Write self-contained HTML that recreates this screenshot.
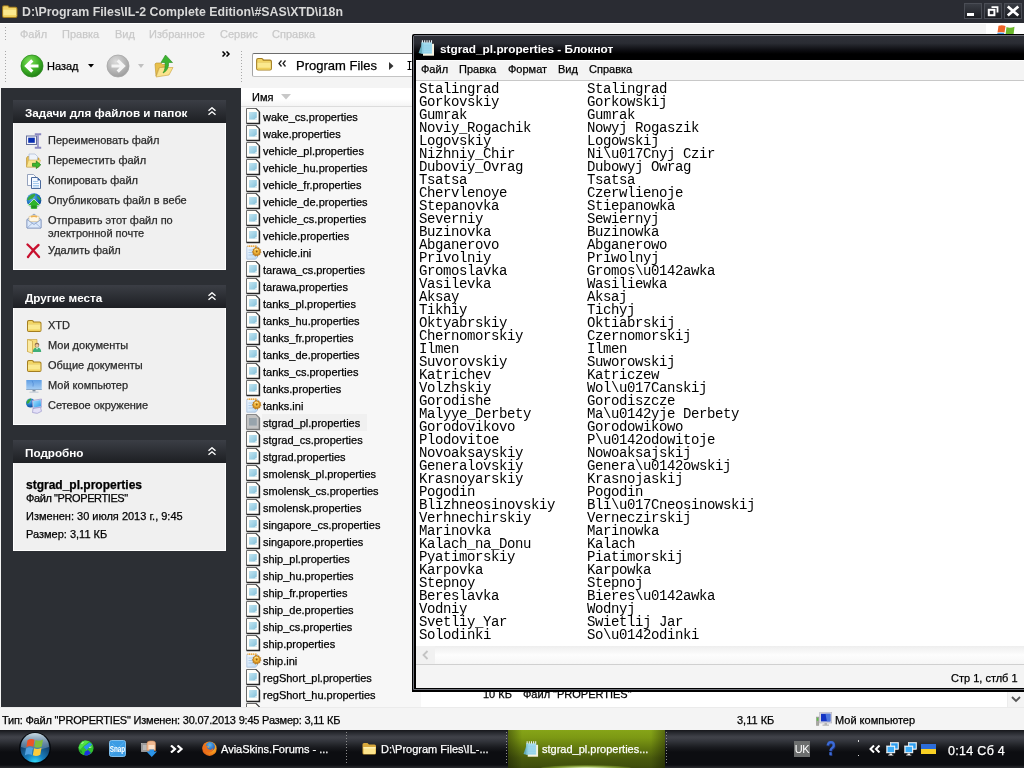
<!DOCTYPE html>
<html><head><meta charset="utf-8"><title>screen</title>
<style>
*{box-sizing:border-box;margin:0;padding:0}
html,body{width:1024px;height:768px;overflow:hidden;background:#f4f4f4}
#root{position:absolute;left:0;top:0;width:1024px;height:768px;overflow:hidden;will-change:transform}
body{font-family:"Liberation Sans",sans-serif;font-size:11px;color:#000;position:relative}
.abs{position:absolute}
.t{position:absolute;white-space:nowrap;line-height:14px;-webkit-text-stroke:0.250px currentColor}
/* explorer */
#etitle{position:absolute;left:0;top:0;width:1024px;height:23px;background:#2a2c33}
#etitle .cap{position:absolute;left:22px;top:4px;font-weight:bold;font-size:12.350px;line-height:16px;color:#d8d8d8;white-space:nowrap}
.tb{position:absolute;top:3px;width:18px;height:16px;border:1px solid #4a4d55;background:linear-gradient(#3a3d45,#1b1d22)}
#emenu{position:absolute;left:0;top:23px;width:1024px;height:22px;background:#f4f4f4;border-top:1px solid #fff}
#emenu .t{top:3px;color:#c9c9c9;font-size:11px}
#etool{position:absolute;left:0;top:45px;width:1024px;height:43px;background:#f4f4f4}
#side{position:absolute;left:1px;top:88px;width:240px;height:619px;background:#2c2f34}
.ph{position:absolute;left:12px;width:213px;height:23px;z-index:2;background:linear-gradient(#3b3e45,#1d1f23);color:#fff;font-weight:bold;font-size:11.700px;line-height:25px;overflow:hidden;padding-left:12px;white-space:nowrap}
.pb{position:absolute;left:12px;width:213px;background:#f0f0f0;box-shadow:inset 1px 0 0 #fff,inset -1px -1px 0 #fff}
.pb .t{left:35px;color:#2a2a2a;font-size:11px}
.pb .d{left:13px;color:#000}
#list{position:absolute;left:241px;top:88px;width:783px;height:619px;background:#fff;overflow:hidden}
#namecol{position:absolute;left:0;top:19px;width:180px;height:600px;background:#f7f7f7}
#lhead{position:absolute;left:0;top:0;width:783px;height:19px;background:linear-gradient(#fff,#fff 60%,#f4f4f4);border-bottom:1px solid #dcdcdc}
.row{position:absolute;left:5px;height:17px;white-space:nowrap;font-size:11px;line-height:18px}
.row span{-webkit-text-stroke:0.250px #000;position:absolute;left:16px;top:0;padding:0 1px;height:17px}
.row.sel span{background:#f0f0f0;padding-right:7px}
.ic{position:absolute;left:0;top:0;width:16px;height:17px}
#estat{position:absolute;left:0;top:707px;width:1024px;height:23px;background:#f4f4f4;border-top:1px solid #ebebeb}
#estat .t{top:5px;font-size:11px}
/* notepad */
#np{position:absolute;left:412px;top:34px;width:640px;height:658px;background:#000;border-top-left-radius:2px}
#npgl{position:absolute;left:1px;top:1px;width:640px;height:655px;border:1px solid #70727a;border-top-left-radius:2px}
#nptitle{position:absolute;left:2px;top:2px;width:640px;height:24px;background:linear-gradient(#2f3138 0,#2a2c33 30%,#0c0c10 60%,#000 75%,#000 100%)}
#nptitle .cap{position:absolute;left:26px;top:6px;color:#fff;font-weight:bold;font-size:11.800px;line-height:14px;white-space:nowrap}
#npmenu{position:absolute;left:4px;top:26px;width:640px;height:21px;background:#f4f4f4;border-bottom:1px solid #c8c8c8;border-top:1px solid #fdfdfd}
#npmenu .t{top:1px;font-size:11px}
#nptext{position:absolute;left:4px;top:47px;width:640px;height:565px;background:#fff;font-family:"Liberation Mono",monospace;font-size:14px;letter-spacing:-0.400px;line-height:13px;padding:2px 0 0 3px;overflow:hidden}
.ln{position:relative;height:13px;white-space:pre}
.c2{position:absolute;left:168px;top:0}
#nphs{position:absolute;left:4px;top:612px;width:640px;height:18px;background:linear-gradient(#eee,#fdfdfd 50%,#f6f6f6)}
#npstat{position:absolute;left:4px;top:630px;width:640px;height:24px;background:#f4f4f4;border-top:1px solid #d0d0d0}
/* taskbar */
#task{position:absolute;left:0;top:730px;width:1024px;height:38px;background:linear-gradient(#15161a 0,#23252a 2px,#35373e 5px,#404249 7px,#3e4047 8px,#33353c 11px,#27292e 14px,#1b1c21 17px,#121317 20px,#0c0d11 22px,#0c0d11 35px,#222327 37px,#28292d 38px)}
#task .t{color:#fff;font-size:11px;top:12px}
#tactive{position:absolute;left:508px;top:0;width:157px;height:38px;overflow:hidden;background:linear-gradient(to right,rgba(0,0,0,0.350),rgba(0,0,0,0) 9%,rgba(0,0,0,0) 91%,rgba(0,0,0,0.350)),linear-gradient(#86a418 0,#7c9814 8px,#62790f 18px,#4a5b0d 28px,#3e4c0c 38px)}
#tglow{position:absolute;left:33px;top:35px;width:90px;height:6px;border-radius:50%;background:radial-gradient(ellipse at center,rgba(235,255,190,0.950) 0,rgba(170,205,70,0.500) 50%,rgba(120,150,30,0) 80%)}
.tsep{position:absolute;top:2px;width:1px;height:33px;background:repeating-linear-gradient(#8c8c8c 0,#8c8c8c 1px,transparent 1px,transparent 3px)}

</style></head>
<body>
<svg width="0" height="0" style="position:absolute"><defs><linearGradient id="pg" x1="0" y1="0" x2="1" y2="1"><stop offset="0" stop-color="#c4e4f0"/><stop offset="0.600" stop-color="#9cd0e4"/><stop offset="1" stop-color="#84bcd4"/></linearGradient><linearGradient id="ig" x1="0" y1="0" x2="1" y2="1"><stop offset="0" stop-color="#f4f9ff"/><stop offset="1" stop-color="#b8d8f4"/></linearGradient></defs></svg>
<div id="root">
<!-- Explorer window -->
<div id="etitle">
  <svg class="abs" style="left:1px;top:3px" width="17" height="16" viewBox="0 0 16 15" preserveAspectRatio="none"><path d="M1 3.800q0-1.800 1.800-1.800h3.400q1.300 0 1.800 1.500h5.700q1.800 0 1.800 1.800v6.900q0 1.800-1.800 1.800h-10.900q-1.800 0-1.800-1.800z" fill="#a47e20"/><path d="M2 4q0-1 1-1h3q0.800 0 1.200 1.500h6.300q1 0 1 1v1h-12.500z" fill="#f2d566"/><path d="M2 6.300h12.500v5.700q0 1-1 1h-10.500q-1 0-1-1z" fill="#fbe98e"/><path d="M2 11.500h12.500v0.500q0 1-1 1h-10.500q-1 0-1-1z" fill="#f0cf5a"/></svg>
  <div class="cap">D:\Program Files\IL-2 Complete Edition\#SAS\XTD\i18n</div>
  <div class="tb" style="left:964px"><svg class="abs" style="left:-1px;top:-1px" width="18" height="16" viewBox="0 0 18 16"><rect x="3" y="10" width="7" height="3" fill="#fff"/></svg></div>
  <div class="tb" style="left:984px"><svg class="abs" style="left:-1px;top:-1px" width="18" height="16" viewBox="0 0 18 16"><path d="M7.500 4.200h6v5.300" fill="none" stroke="#fff" stroke-width="1.800"/><rect x="4.800" y="6.800" width="5.600" height="5.400" fill="none" stroke="#fff" stroke-width="2"/></svg></div>
  <div class="tb" style="left:1004px"><svg class="abs" style="left:-1px;top:-1px" width="18" height="16" viewBox="0 0 18 16"><path d="M3.800 3.500l10.500 9M14.300 3.500l-10.500 9" stroke="#fff" stroke-width="2.800"/></svg></div>
</div>
<div id="emenu">
  <div class="abs" style="left:5px;top:3px;width:1px;height:14px;background:repeating-linear-gradient(#a8a8a8 0,#a8a8a8 1px,transparent 1px,transparent 3px)"></div>
  <div class="t" style="left:20px">Файл</div>
  <div class="t" style="left:62px">Правка</div>
  <div class="t" style="left:115px">Вид</div>
  <div class="t" style="left:149px">Избранное</div>
  <div class="t" style="left:220px">Сервис</div>
  <div class="t" style="left:272px">Справка</div>
  <div class="abs" style="left:986px;top:0;width:38px;height:22px;background:#fff"></div><svg class="abs" style="left:996px;top:1px" width="20" height="12" viewBox="0 0 20 12"><path d="M2.500 0.800q3.500-1.200 7 0.200l-1 6.500q-3.500-1.200-7 0z" fill="#f06428"/><path d="M10.500 2q3.500 1.500 8-0.300l-1 8.300h-8z" fill="#6cb82c"/><path d="M1.400 8q3.500-1.200 6.800 0l-0.500 4h-6.800z" fill="#4c9ce0"/></svg>
</div>
<div id="etool">
  <div class="abs" style="left:5px;top:6px;width:1px;height:31px;background:repeating-linear-gradient(#a8a8a8 0,#a8a8a8 1px,transparent 1px,transparent 3px)"></div>
  <svg class="abs" style="left:20px;top:9px" width="24" height="24" viewBox="0 0 24 24">
    <defs><radialGradient id="gb" cx="0.4" cy="0.3" r="0.75"><stop offset="0" stop-color="#7fe05a"/><stop offset="0.55" stop-color="#3db026"/><stop offset="1" stop-color="#1d7a14"/></radialGradient></defs>
    <circle cx="12" cy="12" r="11" fill="url(#gb)" stroke="#2c8a1e" stroke-width="0.8"/>
    <path d="M18.500 12H7.500M12.300 6.300L6.500 12l5.800 5.700" fill="none" stroke="#fff" stroke-width="3.200" stroke-linejoin="miter"/>
  </svg>
  <div class="t" style="left:47px;top:14px;font-size:11px">Назад</div>
  <svg class="abs" style="left:88px;top:19px" width="6" height="4" viewBox="0 0 6 4"><path d="M0 0h6L3 3.500z" fill="#000"/></svg>
  <svg class="abs" style="left:106px;top:9px" width="24" height="24" viewBox="0 0 24 24">
    <defs><radialGradient id="gg" cx="0.4" cy="0.3" r="0.75"><stop offset="0" stop-color="#dcdcdc"/><stop offset="0.6" stop-color="#b4b4b4"/><stop offset="1" stop-color="#9a9a9a"/></radialGradient></defs>
    <circle cx="12" cy="12" r="11" fill="url(#gg)" stroke="#a6a6a6" stroke-width="0.8"/>
    <path d="M5.500 12H16.500M11.700 6.300L17.500 12l-5.800 5.700" fill="none" stroke="#f4f4f4" stroke-width="3.200" stroke-linejoin="miter"/>
  </svg>
  <svg class="abs" style="left:138px;top:19px" width="6" height="4" viewBox="0 0 6 4"><path d="M0 0h6L3 4z" fill="#c0c0c0"/></svg>
  <svg class="abs" style="left:153px;top:9px" width="22" height="24" viewBox="0 0 22 24">
    <path d="M2 10l1-1h5l1.5 1.5H15V12l-9 2-3 8z" fill="#e8c04c" stroke="#b8902a" stroke-width="0.6"/>
    <path d="M3 23l3.5-9.5H20L16 21z" fill="#fae38c" stroke="#c9a03a" stroke-width="0.6"/>
    <path d="M12.5 1l7 7.5h-4c0.5 5-2 9-5.500 10.500c2-3 2.500-6.500 2-10.500H8z" fill="#3cb430" stroke="#2a8a20" stroke-width="0.6"/>
  </svg>
  <svg class="abs" style="left:222px;top:6px" width="9" height="6" viewBox="0 0 9 6"><path d="M0.500 0.500L3 3 0.500 5.500M4.500 0.500L7 3 4.500 5.500" fill="none" stroke="#000" stroke-width="1.500"/></svg>
  <div class="abs" style="left:241px;top:6px;width:1px;height:31px;background:repeating-linear-gradient(#a8a8a8 0,#a8a8a8 1px,transparent 1px,transparent 3px)"></div>
  <div class="abs" style="left:252px;top:8px;width:400px;height:24px;background:#fff;border:1px solid #a4a4a4;border-top-color:#6c6c6c;border-bottom-color:#c4c4c4;border-radius:2px"></div>
  <svg class="abs" style="left:255px;top:11px" width="17.5" height="16.5" viewBox="0 0 16 16" preserveAspectRatio="none"><path d="M1 3.800q0-1.800 1.800-1.800h3.400q1.300 0 1.800 1.500h5.700q1.800 0 1.800 1.800v6.900q0 1.800-1.800 1.800h-10.900q-1.800 0-1.800-1.800z" fill="#a47e20"/><path d="M2 4q0-1 1-1h3q0.800 0 1.200 1.500h6.300q1 0 1 1v1h-12.500z" fill="#f2d566"/><path d="M2 6.300h12.500v5.700q0 1-1 1h-10.500q-1 0-1-1z" fill="#fbe98e"/><path d="M2 11.500h12.500v0.500q0 1-1 1h-10.500q-1 0-1-1z" fill="#f0cf5a"/></svg>
  <svg class="abs" style="left:278px;top:15px" width="9" height="7" viewBox="0 0 9 7"><path d="M3.500 0.500L1 3.500 3.500 6.500M7.500 0.500L5 3.500 7.500 6.500" fill="none" stroke="#222" stroke-width="1.300"/></svg>
  <div class="t" style="left:296px;top:14px;font-size:13px">Program Files</div>
  <svg class="abs" style="left:389px;top:17px" width="4.500" height="8" viewBox="0 0 5 9"><path d="M0 0l5 4.500L0 9z" fill="#333"/></svg>
  <svg class="abs" style="left:407px;top:16px" width="5" height="9" viewBox="0 0 5 9"><path d="M0.500 0.500h4M2.500 0v9M0.500 8.500h4" stroke="#000" stroke-width="1.100" fill="none"/></svg>
</div>
<div id="side">
  <div class="ph" style="top:12px">Задачи для файлов и папок<svg class="abs" style="left:195px;top:7px" width="8" height="9" viewBox="0 0 8 9"><path d="M0.500 3.800L4 0.800 7.500 3.800M0.500 7.800L4 4.800 7.500 7.800" fill="none" stroke="#fff" stroke-width="1.400"/></svg></div>
  <div class="pb" style="top:34px;height:148px">
    <svg class="abs" style="left:13px;top:11px" width="16" height="16" viewBox="0 0 16 16" preserveAspectRatio="none"><rect x="0.500" y="3" width="10" height="8.500" fill="#f4f4fa" stroke="#66709c" stroke-width="1"/><rect x="2.200" y="4.700" width="6.600" height="5.100" fill="#0a2fb0"/><path d="M8.800 1.200h2.400l0.800 0.800 0.800-0.800h2.400M12 1.500v12.500M8.800 14.800h6.400" fill="none" stroke="#8a88c0" stroke-width="2"/><path d="M12 2v11.500" stroke="#d8d6f0" stroke-width="0.600"/></svg><svg class="abs" style="left:13px;top:31px" width="16" height="16" viewBox="0 0 16 16" preserveAspectRatio="none"><path d="M0.500 5l1-1.500h4l1 1.500h6.500v9h-12.500z" fill="#e8bf50" stroke="#b38a2c" stroke-width="0.600"/><path d="M3 1h6l2.500 2.500v5h-8.500z" fill="#eef3fb" stroke="#9fb0cc" stroke-width="0.600"/><path d="M0.500 14l2-7h12l-2 7z" fill="#fae590" stroke="#c9a544" stroke-width="0.500"/><path d="M6.500 10.300h3.800v-2.300l4.500 3.800-4.500 3.800v-2.300h-3.800z" fill="#3cb82e" stroke="#1d7c18" stroke-width="0.700"/></svg><svg class="abs" style="left:13px;top:51px" width="16" height="16" viewBox="0 0 16 16" preserveAspectRatio="none"><path d="M1.500 1.500h6l2.500 2.500v8.500h-8.500z" fill="#fafcff" stroke="#8a99b5" stroke-width="0.900"/><path d="M5.500 4.500h6l3 3v8h-9z" fill="#f4f8ff" stroke="#4c6a9c" stroke-width="1"/><path d="M11.500 4.500v3h3z" fill="#3f66a8"/><path d="M7 8.500h5M7 10.500h6M7 12.500h6M7 14h6" stroke="#9cc4ea" stroke-width="0.900"/></svg><svg class="abs" style="left:13px;top:71px" width="16" height="16" viewBox="0 0 16 16" preserveAspectRatio="none"><defs><radialGradient id="gl" cx="0.350" cy="0.300" r="0.800"><stop offset="0" stop-color="#6fc0f0"/><stop offset="0.500" stop-color="#1f78c8"/><stop offset="1" stop-color="#0b3f8a"/></radialGradient></defs><circle cx="8" cy="7.500" r="7.300" fill="url(#gl)"/><path d="M3 3.500q2.500-2.800 6-2.800 1 1.500-1 3-1 2-3.500 2.500-2 1.800-3.500 0.800 0.500-2 2-3.500z" fill="#3aa63a"/><path d="M11 2.500q3 1.500 4 4.500-1.500 1-2.500-1-1.500-1-1.500-3.500z" fill="#3aa63a"/><path d="M8 6l6.500 6.500h-3.300v3.500h-6.400v-3.500h-3.300z" fill="#2fb52a" stroke="#e8f8e0" stroke-width="0.700"/><path d="M5.300 12.500h5.400v3h-5.400z" fill="#22961f"/></svg><svg class="abs" style="left:13px;top:91px" width="16" height="16" viewBox="0 0 16 16" preserveAspectRatio="none"><path d="M1 6.500l7-5.500 7 5.500v8.500h-14z" fill="#c9dcf5" stroke="#7d93bd" stroke-width="0.800"/><path d="M3 3.500q5-2.500 10 0v5h-10z" fill="#fff7e4" stroke="#d9b674" stroke-width="0.500"/><path d="M4.500 3.300q3.500-1.500 7 0l-0.500 1.200q-3-1-6 0z" fill="#eeb04e"/><path d="M1 6.500l7 5 7-5v8.500h-14z" fill="#dce9fb" stroke="#7d93bd" stroke-width="0.700"/><path d="M1 15l5.500-5M15 15l-5.500-5" stroke="#8ea6d0" stroke-width="0.700" fill="none"/></svg><svg class="abs" style="left:13px;top:121px" width="16" height="16" viewBox="0 0 16 16" preserveAspectRatio="none"><path d="M1.500 1.500q5 4.500 11.500 12.500M12.500 2q-5.500 4.500-10.500 12" fill="none" stroke="#c8102e" stroke-width="2.300" stroke-linecap="round"/></svg>
    <div class="t" style="top:11px">Переименовать файл</div>
    <div class="t" style="top:31px">Переместить файл</div>
    <div class="t" style="top:51px">Копировать файл</div>
    <div class="t" style="top:71px">Опубликовать файл в вебе</div>
    <div class="t" style="top:91px">Отправить этот файл по</div>
    <div class="t" style="top:104px">электронной почте</div>
    <div class="t" style="top:121px">Удалить файл</div>
  </div>
  <div class="ph" style="top:197px">Другие места<svg class="abs" style="left:195px;top:7px" width="8" height="9" viewBox="0 0 8 9"><path d="M0.500 3.800L4 0.800 7.500 3.800M0.500 7.800L4 4.800 7.500 7.800" fill="none" stroke="#fff" stroke-width="1.400"/></svg></div>
  <div class="pb" style="top:219px;height:118px">
    <svg class="abs" style="left:13px;top:11px" width="16" height="16" viewBox="0 0 16 16" preserveAspectRatio="none"><path d="M1 3.800q0-1.800 1.800-1.800h3.400q1.300 0 1.800 1.500h5.700q1.800 0 1.800 1.800v6.900q0 1.800-1.800 1.800h-10.900q-1.800 0-1.800-1.800z" fill="#a47e20"/><path d="M2 4q0-1 1-1h3q0.800 0 1.200 1.500h6.300q1 0 1 1v1h-12.500z" fill="#f2d566"/><path d="M2 6.300h12.500v5.700q0 1-1 1h-10.500q-1 0-1-1z" fill="#fbe98e"/><path d="M2 11.500h12.500v0.500q0 1-1 1h-10.500q-1 0-1-1z" fill="#f0cf5a"/></svg><svg class="abs" style="left:13px;top:31px" width="16" height="16" viewBox="0 0 16 16" preserveAspectRatio="none"><path d="M1.500 1.500h9.500v12h-9.500z" fill="#f6dc7c" stroke="#c8a548" stroke-width="0.700"/><path d="M1.500 1.500l5 1.500v12.500l-5-2z" fill="#fbeaa0" stroke="#c8a548" stroke-width="0.700"/><circle cx="11" cy="7" r="2.300" fill="#8a6a4a"/><circle cx="11" cy="7.500" r="1.600" fill="#f0c8a0"/><path d="M6.800 14q0-4.500 4.200-4.500t4.200 4.500z" fill="#3fae78"/><path d="M10 9.700l1 2 1-2z" fill="#fff"/></svg><svg class="abs" style="left:13px;top:51px" width="16" height="16" viewBox="0 0 16 16" preserveAspectRatio="none"><path d="M1 3.800q0-1.800 1.800-1.800h3.400q1.300 0 1.800 1.500h5.700q1.800 0 1.800 1.800v6.900q0 1.800-1.800 1.800h-10.900q-1.800 0-1.800-1.800z" fill="#a47e20"/><path d="M2 4q0-1 1-1h3q0.800 0 1.200 1.500h6.300q1 0 1 1v1h-12.500z" fill="#f2d566"/><path d="M2 6.300h12.500v5.700q0 1-1 1h-10.500q-1 0-1-1z" fill="#fbe98e"/><path d="M2 11.500h12.500v0.500q0 1-1 1h-10.500q-1 0-1-1z" fill="#f0cf5a"/></svg><svg class="abs" style="left:13px;top:71px" width="16" height="16" viewBox="0 0 16 16" preserveAspectRatio="none"><defs><linearGradient id="mc" x1="0" y1="0" x2="0" y2="1"><stop offset="0" stop-color="#5f9ee4"/><stop offset="1" stop-color="#a9d0f5"/></linearGradient></defs><rect x="0.300" y="2" width="15.400" height="10" fill="url(#mc)"/><path d="M0.300 11h15.400v1h-15.400z" fill="#8aa8c8"/><path d="M6.500 12h3v1.500h-3z" fill="#7c8c9c"/><path d="M3.500 13.700h9v0.900h-9z" fill="#b8c4d0"/><path d="M6 2.500q2 3 1 6" stroke="#3f78c8" stroke-width="0.500" fill="none"/></svg><svg class="abs" style="left:13px;top:91px" width="16" height="16" viewBox="0 0 16 16" preserveAspectRatio="none"><defs><radialGradient id="ng" cx="0.350" cy="0.300" r="0.800"><stop offset="0" stop-color="#6fc0f0"/><stop offset="0.500" stop-color="#1f78c8"/><stop offset="1" stop-color="#0b3f8a"/></radialGradient><linearGradient id="ns" x1="0" y1="0" x2="1" y2="1"><stop offset="0" stop-color="#9fe0ff"/><stop offset="1" stop-color="#2f9ae8"/></linearGradient></defs><circle cx="4.500" cy="5" r="4.500" fill="url(#ng)"/><path d="M1 3q1.500-2.300 4-2.500 0.500 1.500-1 2.500-0.500 2-2 2.500-0.800 0.500-1.500-0.500z" fill="#3aa63a"/><path d="M6 2.500l9.500-1.500 0.500 8-9 1.500z" fill="#d8d4f0" stroke="#8f8cc4" stroke-width="0.600"/><path d="M7 3.300l7.700-1.200 0.400 6.200-7.400 1.200z" fill="url(#ns)"/><path d="M7 10.500l7.500-1.200 1 4q-4 3.500-9 1.200z" fill="#e4e0f8" stroke="#8f8cc4" stroke-width="0.600"/></svg>
    <div class="t" style="top:11px">XTD</div>
    <div class="t" style="top:31px">Мои документы</div>
    <div class="t" style="top:51px">Общие документы</div>
    <div class="t" style="top:71px">Мой компьютер</div>
    <div class="t" style="top:91px">Сетевое окружение</div>
  </div>
  <div class="ph" style="top:352px">Подробно<svg class="abs" style="left:195px;top:7px" width="8" height="9" viewBox="0 0 8 9"><path d="M0.500 3.800L4 0.800 7.500 3.800M0.500 7.800L4 4.800 7.500 7.800" fill="none" stroke="#fff" stroke-width="1.400"/></svg></div>
  <div class="pb" style="top:374px;height:89px">
    <div class="t d" style="top:16px;font-weight:bold;font-size:12px">stgrad_pl.properties</div>
    <div class="t d" style="top:29px;letter-spacing:-0.400px">Файл "PROPERTIES"</div>
    <div class="t d" style="top:47px">Изменен: 30 июля 2013 г., 9:45</div>
    <div class="t d" style="top:65px">Размер: 3,11 КБ</div>
  </div>
</div>
<div id="list">
  <div id="namecol"></div>
  <div id="lhead"><div class="t" style="left:11px;top:2px;font-size:11px">Имя</div>
    <svg class="abs" style="left:40px;top:6px" width="10" height="6" viewBox="0 0 10 6"><path d="M0 0h10L5 5.500z" fill="#c8c8c8"/></svg>
  </div>
<div class="row" style="top:20px"><svg class="ic" viewBox="0 0 16 17"><path d="M0.500 0.500H10L13.500 4V15.500H0.500z" fill="#fffefa"/><path d="M0.500 15.500V0.500H10" fill="none" stroke="#6a6a6a" stroke-width="1"/><path d="M9.800 0.300L13.700 4.200" fill="none" stroke="#333" stroke-width="1.100"/><path d="M13.400 4V15.400H0.500" fill="none" stroke="#262626" stroke-width="1.500"/><rect x="3" y="4" width="7.800" height="7.600" fill="url(#pg)"/><path d="M10.800 9.500v2.100h-2.600z" fill="#f4fbfd"/></svg><span>wake_cs.properties</span></div>
<div class="row" style="top:37px"><svg class="ic" viewBox="0 0 16 17"><path d="M0.500 0.500H10L13.500 4V15.500H0.500z" fill="#fffefa"/><path d="M0.500 15.500V0.500H10" fill="none" stroke="#6a6a6a" stroke-width="1"/><path d="M9.800 0.300L13.700 4.200" fill="none" stroke="#333" stroke-width="1.100"/><path d="M13.400 4V15.400H0.500" fill="none" stroke="#262626" stroke-width="1.500"/><rect x="3" y="4" width="7.800" height="7.600" fill="url(#pg)"/><path d="M10.800 9.500v2.100h-2.600z" fill="#f4fbfd"/></svg><span>wake.properties</span></div>
<div class="row" style="top:54px"><svg class="ic" viewBox="0 0 16 17"><path d="M0.500 0.500H10L13.500 4V15.500H0.500z" fill="#fffefa"/><path d="M0.500 15.500V0.500H10" fill="none" stroke="#6a6a6a" stroke-width="1"/><path d="M9.800 0.300L13.700 4.200" fill="none" stroke="#333" stroke-width="1.100"/><path d="M13.400 4V15.400H0.500" fill="none" stroke="#262626" stroke-width="1.500"/><rect x="3" y="4" width="7.800" height="7.600" fill="url(#pg)"/><path d="M10.800 9.500v2.100h-2.600z" fill="#f4fbfd"/></svg><span>vehicle_pl.properties</span></div>
<div class="row" style="top:71px"><svg class="ic" viewBox="0 0 16 17"><path d="M0.500 0.500H10L13.500 4V15.500H0.500z" fill="#fffefa"/><path d="M0.500 15.500V0.500H10" fill="none" stroke="#6a6a6a" stroke-width="1"/><path d="M9.800 0.300L13.700 4.200" fill="none" stroke="#333" stroke-width="1.100"/><path d="M13.400 4V15.400H0.500" fill="none" stroke="#262626" stroke-width="1.500"/><rect x="3" y="4" width="7.800" height="7.600" fill="url(#pg)"/><path d="M10.800 9.500v2.100h-2.600z" fill="#f4fbfd"/></svg><span>vehicle_hu.properties</span></div>
<div class="row" style="top:88px"><svg class="ic" viewBox="0 0 16 17"><path d="M0.500 0.500H10L13.500 4V15.500H0.500z" fill="#fffefa"/><path d="M0.500 15.500V0.500H10" fill="none" stroke="#6a6a6a" stroke-width="1"/><path d="M9.800 0.300L13.700 4.200" fill="none" stroke="#333" stroke-width="1.100"/><path d="M13.400 4V15.400H0.500" fill="none" stroke="#262626" stroke-width="1.500"/><rect x="3" y="4" width="7.800" height="7.600" fill="url(#pg)"/><path d="M10.800 9.500v2.100h-2.600z" fill="#f4fbfd"/></svg><span>vehicle_fr.properties</span></div>
<div class="row" style="top:105px"><svg class="ic" viewBox="0 0 16 17"><path d="M0.500 0.500H10L13.500 4V15.500H0.500z" fill="#fffefa"/><path d="M0.500 15.500V0.500H10" fill="none" stroke="#6a6a6a" stroke-width="1"/><path d="M9.800 0.300L13.700 4.200" fill="none" stroke="#333" stroke-width="1.100"/><path d="M13.400 4V15.400H0.500" fill="none" stroke="#262626" stroke-width="1.500"/><rect x="3" y="4" width="7.800" height="7.600" fill="url(#pg)"/><path d="M10.800 9.500v2.100h-2.600z" fill="#f4fbfd"/></svg><span>vehicle_de.properties</span></div>
<div class="row" style="top:122px"><svg class="ic" viewBox="0 0 16 17"><path d="M0.500 0.500H10L13.500 4V15.500H0.500z" fill="#fffefa"/><path d="M0.500 15.500V0.500H10" fill="none" stroke="#6a6a6a" stroke-width="1"/><path d="M9.800 0.300L13.700 4.200" fill="none" stroke="#333" stroke-width="1.100"/><path d="M13.400 4V15.400H0.500" fill="none" stroke="#262626" stroke-width="1.500"/><rect x="3" y="4" width="7.800" height="7.600" fill="url(#pg)"/><path d="M10.800 9.500v2.100h-2.600z" fill="#f4fbfd"/></svg><span>vehicle_cs.properties</span></div>
<div class="row" style="top:139px"><svg class="ic" viewBox="0 0 16 17"><path d="M0.500 0.500H10L13.500 4V15.500H0.500z" fill="#fffefa"/><path d="M0.500 15.500V0.500H10" fill="none" stroke="#6a6a6a" stroke-width="1"/><path d="M9.800 0.300L13.700 4.200" fill="none" stroke="#333" stroke-width="1.100"/><path d="M13.400 4V15.400H0.500" fill="none" stroke="#262626" stroke-width="1.500"/><rect x="3" y="4" width="7.800" height="7.600" fill="url(#pg)"/><path d="M10.800 9.500v2.100h-2.600z" fill="#f4fbfd"/></svg><span>vehicle.properties</span></div>
<div class="row" style="top:156px"><svg class="ic" viewBox="0 0 16 17"><path d="M0.800 2.500H11.500V13L9.500 15.200H0.800z" fill="url(#ig)" stroke="#9cb4d4" stroke-width="0.700"/><path d="M1.500 1.300h9.500v1.700h-9.500z" fill="#e8a848"/><path d="M2.500 0.800v2M4.500 0.800v2M6.500 0.800v2M8.500 0.800v2M10.300 0.800v2" stroke="#fff4dc" stroke-width="0.700"/><path d="M2.500 6h4M2.500 8.500h3.500M2.500 11h5" stroke="#a8c8e8" stroke-width="0.900"/><path d="M10.500 3l1 1.200 1.500-0.500 0.300 1.500 1.500 0.500-0.600 1.400 1 1.200-1.300 0.800 0.100 1.600-1.500 0.100-0.700 1.400-1.400-0.700-1.400 0.700-0.600-1.400-1.500-0.300 0.300-1.500-1.100-1.100 1.100-1.100-0.200-1.500 1.500-0.300 0.600-1.400z" fill="#d08c20" stroke="#a06410" stroke-width="0.500"/><circle cx="10.500" cy="7.300" r="2.700" fill="#f0b840"/><path d="M8.500 6q1.500-1.500 3.500-0.500" stroke="#fce4a0" stroke-width="1" fill="none"/><circle cx="10.700" cy="7.500" r="0.900" fill="#8c5c14"/></svg><span>vehicle.ini</span></div>
<div class="row" style="top:173px"><svg class="ic" viewBox="0 0 16 17"><path d="M0.500 0.500H10L13.500 4V15.500H0.500z" fill="#fffefa"/><path d="M0.500 15.500V0.500H10" fill="none" stroke="#6a6a6a" stroke-width="1"/><path d="M9.800 0.300L13.700 4.200" fill="none" stroke="#333" stroke-width="1.100"/><path d="M13.400 4V15.400H0.500" fill="none" stroke="#262626" stroke-width="1.500"/><rect x="3" y="4" width="7.800" height="7.600" fill="url(#pg)"/><path d="M10.800 9.500v2.100h-2.600z" fill="#f4fbfd"/></svg><span>tarawa_cs.properties</span></div>
<div class="row" style="top:190px"><svg class="ic" viewBox="0 0 16 17"><path d="M0.500 0.500H10L13.500 4V15.500H0.500z" fill="#fffefa"/><path d="M0.500 15.500V0.500H10" fill="none" stroke="#6a6a6a" stroke-width="1"/><path d="M9.800 0.300L13.700 4.200" fill="none" stroke="#333" stroke-width="1.100"/><path d="M13.400 4V15.400H0.500" fill="none" stroke="#262626" stroke-width="1.500"/><rect x="3" y="4" width="7.800" height="7.600" fill="url(#pg)"/><path d="M10.800 9.500v2.100h-2.600z" fill="#f4fbfd"/></svg><span>tarawa.properties</span></div>
<div class="row" style="top:207px"><svg class="ic" viewBox="0 0 16 17"><path d="M0.500 0.500H10L13.500 4V15.500H0.500z" fill="#fffefa"/><path d="M0.500 15.500V0.500H10" fill="none" stroke="#6a6a6a" stroke-width="1"/><path d="M9.800 0.300L13.700 4.200" fill="none" stroke="#333" stroke-width="1.100"/><path d="M13.400 4V15.400H0.500" fill="none" stroke="#262626" stroke-width="1.500"/><rect x="3" y="4" width="7.800" height="7.600" fill="url(#pg)"/><path d="M10.800 9.500v2.100h-2.600z" fill="#f4fbfd"/></svg><span>tanks_pl.properties</span></div>
<div class="row" style="top:224px"><svg class="ic" viewBox="0 0 16 17"><path d="M0.500 0.500H10L13.500 4V15.500H0.500z" fill="#fffefa"/><path d="M0.500 15.500V0.500H10" fill="none" stroke="#6a6a6a" stroke-width="1"/><path d="M9.800 0.300L13.700 4.200" fill="none" stroke="#333" stroke-width="1.100"/><path d="M13.400 4V15.400H0.500" fill="none" stroke="#262626" stroke-width="1.500"/><rect x="3" y="4" width="7.800" height="7.600" fill="url(#pg)"/><path d="M10.800 9.500v2.100h-2.600z" fill="#f4fbfd"/></svg><span>tanks_hu.properties</span></div>
<div class="row" style="top:241px"><svg class="ic" viewBox="0 0 16 17"><path d="M0.500 0.500H10L13.500 4V15.500H0.500z" fill="#fffefa"/><path d="M0.500 15.500V0.500H10" fill="none" stroke="#6a6a6a" stroke-width="1"/><path d="M9.800 0.300L13.700 4.200" fill="none" stroke="#333" stroke-width="1.100"/><path d="M13.400 4V15.400H0.500" fill="none" stroke="#262626" stroke-width="1.500"/><rect x="3" y="4" width="7.800" height="7.600" fill="url(#pg)"/><path d="M10.800 9.500v2.100h-2.600z" fill="#f4fbfd"/></svg><span>tanks_fr.properties</span></div>
<div class="row" style="top:258px"><svg class="ic" viewBox="0 0 16 17"><path d="M0.500 0.500H10L13.500 4V15.500H0.500z" fill="#fffefa"/><path d="M0.500 15.500V0.500H10" fill="none" stroke="#6a6a6a" stroke-width="1"/><path d="M9.800 0.300L13.700 4.200" fill="none" stroke="#333" stroke-width="1.100"/><path d="M13.400 4V15.400H0.500" fill="none" stroke="#262626" stroke-width="1.500"/><rect x="3" y="4" width="7.800" height="7.600" fill="url(#pg)"/><path d="M10.800 9.500v2.100h-2.600z" fill="#f4fbfd"/></svg><span>tanks_de.properties</span></div>
<div class="row" style="top:275px"><svg class="ic" viewBox="0 0 16 17"><path d="M0.500 0.500H10L13.500 4V15.500H0.500z" fill="#fffefa"/><path d="M0.500 15.500V0.500H10" fill="none" stroke="#6a6a6a" stroke-width="1"/><path d="M9.800 0.300L13.700 4.200" fill="none" stroke="#333" stroke-width="1.100"/><path d="M13.400 4V15.400H0.500" fill="none" stroke="#262626" stroke-width="1.500"/><rect x="3" y="4" width="7.800" height="7.600" fill="url(#pg)"/><path d="M10.800 9.500v2.100h-2.600z" fill="#f4fbfd"/></svg><span>tanks_cs.properties</span></div>
<div class="row" style="top:292px"><svg class="ic" viewBox="0 0 16 17"><path d="M0.500 0.500H10L13.500 4V15.500H0.500z" fill="#fffefa"/><path d="M0.500 15.500V0.500H10" fill="none" stroke="#6a6a6a" stroke-width="1"/><path d="M9.800 0.300L13.700 4.200" fill="none" stroke="#333" stroke-width="1.100"/><path d="M13.400 4V15.400H0.500" fill="none" stroke="#262626" stroke-width="1.500"/><rect x="3" y="4" width="7.800" height="7.600" fill="url(#pg)"/><path d="M10.800 9.500v2.100h-2.600z" fill="#f4fbfd"/></svg><span>tanks.properties</span></div>
<div class="row" style="top:309px"><svg class="ic" viewBox="0 0 16 17"><path d="M0.800 2.500H11.500V13L9.500 15.200H0.800z" fill="url(#ig)" stroke="#9cb4d4" stroke-width="0.700"/><path d="M1.500 1.300h9.500v1.700h-9.500z" fill="#e8a848"/><path d="M2.500 0.800v2M4.500 0.800v2M6.500 0.800v2M8.500 0.800v2M10.300 0.800v2" stroke="#fff4dc" stroke-width="0.700"/><path d="M2.500 6h4M2.500 8.500h3.500M2.500 11h5" stroke="#a8c8e8" stroke-width="0.900"/><path d="M10.500 3l1 1.200 1.500-0.500 0.300 1.500 1.500 0.500-0.600 1.400 1 1.200-1.300 0.800 0.100 1.600-1.500 0.100-0.700 1.400-1.400-0.700-1.400 0.700-0.600-1.400-1.500-0.300 0.300-1.500-1.100-1.100 1.100-1.100-0.200-1.500 1.500-0.300 0.600-1.400z" fill="#d08c20" stroke="#a06410" stroke-width="0.500"/><circle cx="10.500" cy="7.300" r="2.700" fill="#f0b840"/><path d="M8.500 6q1.500-1.500 3.500-0.500" stroke="#fce4a0" stroke-width="1" fill="none"/><circle cx="10.700" cy="7.500" r="0.900" fill="#8c5c14"/></svg><span>tanks.ini</span></div>
<div class="row sel" style="top:326px"><svg class="ic" viewBox="0 0 16 17"><path d="M0.500 0.500H10L13.500 4V15.500H0.500z" fill="#c4c4c4"/><path d="M0.500 15.500V0.500H10" fill="none" stroke="#8a8a8a" stroke-width="1"/><path d="M9.800 0.300L13.700 4.200" fill="none" stroke="#808080" stroke-width="1.100"/><path d="M13.400 4V15.400H0.500" fill="none" stroke="#7a7a7a" stroke-width="1.500"/><rect x="3" y="4" width="7.800" height="7.600" fill="#98a4ac"/></svg><span>stgrad_pl.properties</span></div>
<div class="row" style="top:343px"><svg class="ic" viewBox="0 0 16 17"><path d="M0.500 0.500H10L13.500 4V15.500H0.500z" fill="#fffefa"/><path d="M0.500 15.500V0.500H10" fill="none" stroke="#6a6a6a" stroke-width="1"/><path d="M9.800 0.300L13.700 4.200" fill="none" stroke="#333" stroke-width="1.100"/><path d="M13.400 4V15.400H0.500" fill="none" stroke="#262626" stroke-width="1.500"/><rect x="3" y="4" width="7.800" height="7.600" fill="url(#pg)"/><path d="M10.800 9.500v2.100h-2.600z" fill="#f4fbfd"/></svg><span>stgrad_cs.properties</span></div>
<div class="row" style="top:360px"><svg class="ic" viewBox="0 0 16 17"><path d="M0.500 0.500H10L13.500 4V15.500H0.500z" fill="#fffefa"/><path d="M0.500 15.500V0.500H10" fill="none" stroke="#6a6a6a" stroke-width="1"/><path d="M9.800 0.300L13.700 4.200" fill="none" stroke="#333" stroke-width="1.100"/><path d="M13.400 4V15.400H0.500" fill="none" stroke="#262626" stroke-width="1.500"/><rect x="3" y="4" width="7.800" height="7.600" fill="url(#pg)"/><path d="M10.800 9.500v2.100h-2.600z" fill="#f4fbfd"/></svg><span>stgrad.properties</span></div>
<div class="row" style="top:377px"><svg class="ic" viewBox="0 0 16 17"><path d="M0.500 0.500H10L13.500 4V15.500H0.500z" fill="#fffefa"/><path d="M0.500 15.500V0.500H10" fill="none" stroke="#6a6a6a" stroke-width="1"/><path d="M9.800 0.300L13.700 4.200" fill="none" stroke="#333" stroke-width="1.100"/><path d="M13.400 4V15.400H0.500" fill="none" stroke="#262626" stroke-width="1.500"/><rect x="3" y="4" width="7.800" height="7.600" fill="url(#pg)"/><path d="M10.800 9.500v2.100h-2.600z" fill="#f4fbfd"/></svg><span>smolensk_pl.properties</span></div>
<div class="row" style="top:394px"><svg class="ic" viewBox="0 0 16 17"><path d="M0.500 0.500H10L13.500 4V15.500H0.500z" fill="#fffefa"/><path d="M0.500 15.500V0.500H10" fill="none" stroke="#6a6a6a" stroke-width="1"/><path d="M9.800 0.300L13.700 4.200" fill="none" stroke="#333" stroke-width="1.100"/><path d="M13.400 4V15.400H0.500" fill="none" stroke="#262626" stroke-width="1.500"/><rect x="3" y="4" width="7.800" height="7.600" fill="url(#pg)"/><path d="M10.800 9.500v2.100h-2.600z" fill="#f4fbfd"/></svg><span>smolensk_cs.properties</span></div>
<div class="row" style="top:411px"><svg class="ic" viewBox="0 0 16 17"><path d="M0.500 0.500H10L13.500 4V15.500H0.500z" fill="#fffefa"/><path d="M0.500 15.500V0.500H10" fill="none" stroke="#6a6a6a" stroke-width="1"/><path d="M9.800 0.300L13.700 4.200" fill="none" stroke="#333" stroke-width="1.100"/><path d="M13.400 4V15.400H0.500" fill="none" stroke="#262626" stroke-width="1.500"/><rect x="3" y="4" width="7.800" height="7.600" fill="url(#pg)"/><path d="M10.800 9.500v2.100h-2.600z" fill="#f4fbfd"/></svg><span>smolensk.properties</span></div>
<div class="row" style="top:428px"><svg class="ic" viewBox="0 0 16 17"><path d="M0.500 0.500H10L13.500 4V15.500H0.500z" fill="#fffefa"/><path d="M0.500 15.500V0.500H10" fill="none" stroke="#6a6a6a" stroke-width="1"/><path d="M9.800 0.300L13.700 4.200" fill="none" stroke="#333" stroke-width="1.100"/><path d="M13.400 4V15.400H0.500" fill="none" stroke="#262626" stroke-width="1.500"/><rect x="3" y="4" width="7.800" height="7.600" fill="url(#pg)"/><path d="M10.800 9.500v2.100h-2.600z" fill="#f4fbfd"/></svg><span>singapore_cs.properties</span></div>
<div class="row" style="top:445px"><svg class="ic" viewBox="0 0 16 17"><path d="M0.500 0.500H10L13.500 4V15.500H0.500z" fill="#fffefa"/><path d="M0.500 15.500V0.500H10" fill="none" stroke="#6a6a6a" stroke-width="1"/><path d="M9.800 0.300L13.700 4.200" fill="none" stroke="#333" stroke-width="1.100"/><path d="M13.400 4V15.400H0.500" fill="none" stroke="#262626" stroke-width="1.500"/><rect x="3" y="4" width="7.800" height="7.600" fill="url(#pg)"/><path d="M10.800 9.500v2.100h-2.600z" fill="#f4fbfd"/></svg><span>singapore.properties</span></div>
<div class="row" style="top:462px"><svg class="ic" viewBox="0 0 16 17"><path d="M0.500 0.500H10L13.500 4V15.500H0.500z" fill="#fffefa"/><path d="M0.500 15.500V0.500H10" fill="none" stroke="#6a6a6a" stroke-width="1"/><path d="M9.800 0.300L13.700 4.200" fill="none" stroke="#333" stroke-width="1.100"/><path d="M13.400 4V15.400H0.500" fill="none" stroke="#262626" stroke-width="1.500"/><rect x="3" y="4" width="7.800" height="7.600" fill="url(#pg)"/><path d="M10.800 9.500v2.100h-2.600z" fill="#f4fbfd"/></svg><span>ship_pl.properties</span></div>
<div class="row" style="top:479px"><svg class="ic" viewBox="0 0 16 17"><path d="M0.500 0.500H10L13.500 4V15.500H0.500z" fill="#fffefa"/><path d="M0.500 15.500V0.500H10" fill="none" stroke="#6a6a6a" stroke-width="1"/><path d="M9.800 0.300L13.700 4.200" fill="none" stroke="#333" stroke-width="1.100"/><path d="M13.400 4V15.400H0.500" fill="none" stroke="#262626" stroke-width="1.500"/><rect x="3" y="4" width="7.800" height="7.600" fill="url(#pg)"/><path d="M10.800 9.500v2.100h-2.600z" fill="#f4fbfd"/></svg><span>ship_hu.properties</span></div>
<div class="row" style="top:496px"><svg class="ic" viewBox="0 0 16 17"><path d="M0.500 0.500H10L13.500 4V15.500H0.500z" fill="#fffefa"/><path d="M0.500 15.500V0.500H10" fill="none" stroke="#6a6a6a" stroke-width="1"/><path d="M9.800 0.300L13.700 4.200" fill="none" stroke="#333" stroke-width="1.100"/><path d="M13.400 4V15.400H0.500" fill="none" stroke="#262626" stroke-width="1.500"/><rect x="3" y="4" width="7.800" height="7.600" fill="url(#pg)"/><path d="M10.800 9.500v2.100h-2.600z" fill="#f4fbfd"/></svg><span>ship_fr.properties</span></div>
<div class="row" style="top:513px"><svg class="ic" viewBox="0 0 16 17"><path d="M0.500 0.500H10L13.500 4V15.500H0.500z" fill="#fffefa"/><path d="M0.500 15.500V0.500H10" fill="none" stroke="#6a6a6a" stroke-width="1"/><path d="M9.800 0.300L13.700 4.200" fill="none" stroke="#333" stroke-width="1.100"/><path d="M13.400 4V15.400H0.500" fill="none" stroke="#262626" stroke-width="1.500"/><rect x="3" y="4" width="7.800" height="7.600" fill="url(#pg)"/><path d="M10.800 9.500v2.100h-2.600z" fill="#f4fbfd"/></svg><span>ship_de.properties</span></div>
<div class="row" style="top:530px"><svg class="ic" viewBox="0 0 16 17"><path d="M0.500 0.500H10L13.500 4V15.500H0.500z" fill="#fffefa"/><path d="M0.500 15.500V0.500H10" fill="none" stroke="#6a6a6a" stroke-width="1"/><path d="M9.800 0.300L13.700 4.200" fill="none" stroke="#333" stroke-width="1.100"/><path d="M13.400 4V15.400H0.500" fill="none" stroke="#262626" stroke-width="1.500"/><rect x="3" y="4" width="7.800" height="7.600" fill="url(#pg)"/><path d="M10.800 9.500v2.100h-2.600z" fill="#f4fbfd"/></svg><span>ship_cs.properties</span></div>
<div class="row" style="top:547px"><svg class="ic" viewBox="0 0 16 17"><path d="M0.500 0.500H10L13.500 4V15.500H0.500z" fill="#fffefa"/><path d="M0.500 15.500V0.500H10" fill="none" stroke="#6a6a6a" stroke-width="1"/><path d="M9.800 0.300L13.700 4.200" fill="none" stroke="#333" stroke-width="1.100"/><path d="M13.400 4V15.400H0.500" fill="none" stroke="#262626" stroke-width="1.500"/><rect x="3" y="4" width="7.800" height="7.600" fill="url(#pg)"/><path d="M10.800 9.500v2.100h-2.600z" fill="#f4fbfd"/></svg><span>ship.properties</span></div>
<div class="row" style="top:564px"><svg class="ic" viewBox="0 0 16 17"><path d="M0.800 2.500H11.500V13L9.500 15.200H0.800z" fill="url(#ig)" stroke="#9cb4d4" stroke-width="0.700"/><path d="M1.500 1.300h9.500v1.700h-9.500z" fill="#e8a848"/><path d="M2.500 0.800v2M4.500 0.800v2M6.500 0.800v2M8.500 0.800v2M10.300 0.800v2" stroke="#fff4dc" stroke-width="0.700"/><path d="M2.500 6h4M2.500 8.500h3.500M2.500 11h5" stroke="#a8c8e8" stroke-width="0.900"/><path d="M10.500 3l1 1.200 1.500-0.500 0.300 1.500 1.500 0.500-0.600 1.400 1 1.200-1.300 0.800 0.100 1.600-1.500 0.100-0.700 1.400-1.400-0.700-1.400 0.700-0.600-1.400-1.500-0.300 0.300-1.500-1.100-1.100 1.100-1.100-0.200-1.500 1.500-0.300 0.600-1.400z" fill="#d08c20" stroke="#a06410" stroke-width="0.500"/><circle cx="10.500" cy="7.300" r="2.700" fill="#f0b840"/><path d="M8.500 6q1.500-1.500 3.500-0.500" stroke="#fce4a0" stroke-width="1" fill="none"/><circle cx="10.700" cy="7.500" r="0.900" fill="#8c5c14"/></svg><span>ship.ini</span></div>
<div class="row" style="top:581px"><svg class="ic" viewBox="0 0 16 17"><path d="M0.500 0.500H10L13.500 4V15.500H0.500z" fill="#fffefa"/><path d="M0.500 15.500V0.500H10" fill="none" stroke="#6a6a6a" stroke-width="1"/><path d="M9.800 0.300L13.700 4.200" fill="none" stroke="#333" stroke-width="1.100"/><path d="M13.400 4V15.400H0.500" fill="none" stroke="#262626" stroke-width="1.500"/><rect x="3" y="4" width="7.800" height="7.600" fill="url(#pg)"/><path d="M10.800 9.500v2.100h-2.600z" fill="#f4fbfd"/></svg><span>regShort_pl.properties</span></div>
<div class="row" style="top:598px"><svg class="ic" viewBox="0 0 16 17"><path d="M0.500 0.500H10L13.500 4V15.500H0.500z" fill="#fffefa"/><path d="M0.500 15.500V0.500H10" fill="none" stroke="#6a6a6a" stroke-width="1"/><path d="M9.800 0.300L13.700 4.200" fill="none" stroke="#333" stroke-width="1.100"/><path d="M13.400 4V15.400H0.500" fill="none" stroke="#262626" stroke-width="1.500"/><rect x="3" y="4" width="7.800" height="7.600" fill="url(#pg)"/><path d="M10.800 9.500v2.100h-2.600z" fill="#f4fbfd"/></svg><span>regShort_hu.properties</span></div>
<div class="row" style="top:615px"><svg class="ic" viewBox="0 0 16 17"><path d="M0.500 0.500H10L13.500 4V15.500H0.500z" fill="#fffefa"/><path d="M0.500 15.500V0.500H10" fill="none" stroke="#6a6a6a" stroke-width="1"/><path d="M9.800 0.300L13.700 4.200" fill="none" stroke="#333" stroke-width="1.100"/><path d="M13.400 4V15.400H0.500" fill="none" stroke="#262626" stroke-width="1.500"/><rect x="3" y="4" width="7.800" height="7.600" fill="url(#pg)"/><path d="M10.800 9.500v2.100h-2.600z" fill="#f4fbfd"/></svg><span>regShort_fr.properties</span></div>
  <div class="t" style="left:242px;top:599px;font-size:11px">10 КБ</div>
  <div class="t" style="left:282px;top:599px;font-size:11px">Файл "PROPERTIES"</div>
  <div class="abs" style="left:766px;top:604px;width:17px;height:15px;background:#f4f4f4;border-left:1px solid #ececec"></div>
  <svg class="abs" style="left:770px;top:608px" width="10" height="7" viewBox="0 0 10 7"><path d="M1 1l4 4 4-4" fill="none" stroke="#555" stroke-width="1.800"/></svg>
</div>
<div id="estat">
  <div class="t" style="left:2px;letter-spacing:-0.200px">Тип: Файл "PROPERTIES" Изменен: 30.07.2013 9:45 Размер: 3,11 КБ</div>
  <div class="t" style="left:737px">3,11 КБ</div>
  <svg class="abs" style="left:816px;top:4px" width="17" height="15" viewBox="0 0 17 15" preserveAspectRatio="none"><rect x="0.300" y="5" width="2.600" height="8.500" fill="#a8a8a0" stroke="#888" stroke-width="0.400"/><rect x="0.800" y="5.800" width="1.500" height="3" fill="#5cc048"/><rect x="3.700" y="0.500" width="12" height="10.500" fill="#d8d8e0" stroke="#b0b0bc" stroke-width="0.600"/><rect x="5" y="1.800" width="9.400" height="7.600" fill="#1434c4"/><path d="M9.500 1.800h4.900v7.600h-3.500z" fill="#5c88e4" opacity="0.800"/><path d="M8.500 11h2.500v1.500h-2.500zM6.500 12.500h6.500v1.200h-6.500z" fill="#b4b4b4"/></svg><div class="t" style="left:835px">Мой компьютер</div>
</div>
<!-- Notepad -->
<div id="np">
  <div id="npgl"></div>
  <div id="nptitle"><svg class="abs" style="left:4px;top:4px" width="17" height="16" viewBox="0 0 17 17" preserveAspectRatio="none"><path d="M5 4h11v12.700h-11z" fill="#f6f2de"/><path d="M3.500 2.500h10.500v12h-10.500z" fill="#a4dcee"/><path d="M3.700 4.500L0.600 13.800 3.700 14.500z" fill="#62acbc"/><path d="M3.500 2.500h2v12h-2z" fill="#84c8dc" opacity="0.800"/><path d="M5 5.500h8.500M5 7.500h8.500M5 9.500h8.500M5 11.500h8.500M5 13.500h8.500" stroke="#84c8e4" stroke-width="0.600"/><path d="M4.400 0.300v2.700M6.700 0.300v2.700M9 0.300v2.700M11.300 0.300v2.700M13.500 0.300v2.700" stroke="#f0f8fc" stroke-width="1.100"/></svg><div class="cap">stgrad_pl.properties - Блокнот</div></div>
  <div id="npmenu">
    <div class="t" style="left:5px">Файл</div>
    <div class="t" style="left:43px">Правка</div>
    <div class="t" style="left:92px">Формат</div>
    <div class="t" style="left:142px">Вид</div>
    <div class="t" style="left:173px">Справка</div>
  </div>
  <div id="nptext">
<div class="ln"><span class="c1">Stalingrad</span><span class="c2">Stalingrad</span></div>
<div class="ln"><span class="c1">Gorkovskiy</span><span class="c2">Gorkowskij</span></div>
<div class="ln"><span class="c1">Gumrak</span><span class="c2">Gumrak</span></div>
<div class="ln"><span class="c1">Noviy_Rogachik</span><span class="c2">Nowyj Rogaszik</span></div>
<div class="ln"><span class="c1">Logovskiy</span><span class="c2">Logowskij</span></div>
<div class="ln"><span class="c1">Nizhniy_Chir</span><span class="c2">Ni\u017Cnyj Czir</span></div>
<div class="ln"><span class="c1">Duboviy_Ovrag</span><span class="c2">Dubowyj Owrag</span></div>
<div class="ln"><span class="c1">Tsatsa</span><span class="c2">Tsatsa</span></div>
<div class="ln"><span class="c1">Chervlenoye</span><span class="c2">Czerwlienoje</span></div>
<div class="ln"><span class="c1">Stepanovka</span><span class="c2">Stiepanowka</span></div>
<div class="ln"><span class="c1">Severniy</span><span class="c2">Sewiernyj</span></div>
<div class="ln"><span class="c1">Buzinovka</span><span class="c2">Buzinowka</span></div>
<div class="ln"><span class="c1">Abganerovo</span><span class="c2">Abganerowo</span></div>
<div class="ln"><span class="c1">Privolniy</span><span class="c2">Priwolnyj</span></div>
<div class="ln"><span class="c1">Gromoslavka</span><span class="c2">Gromos\u0142awka</span></div>
<div class="ln"><span class="c1">Vasilevka</span><span class="c2">Wasiliewka</span></div>
<div class="ln"><span class="c1">Aksay</span><span class="c2">Aksaj</span></div>
<div class="ln"><span class="c1">Tikhiy</span><span class="c2">Tichyj</span></div>
<div class="ln"><span class="c1">Oktyabrskiy</span><span class="c2">Oktiabrskij</span></div>
<div class="ln"><span class="c1">Chernomorskiy</span><span class="c2">Czernomorskij</span></div>
<div class="ln"><span class="c1">Ilmen</span><span class="c2">Ilmen</span></div>
<div class="ln"><span class="c1">Suvorovskiy</span><span class="c2">Suworowskij</span></div>
<div class="ln"><span class="c1">Katrichev</span><span class="c2">Katriczew</span></div>
<div class="ln"><span class="c1">Volzhskiy</span><span class="c2">Wol\u017Canskij</span></div>
<div class="ln"><span class="c1">Gorodishe</span><span class="c2">Gorodiszcze</span></div>
<div class="ln"><span class="c1">Malyye_Derbety</span><span class="c2">Ma\u0142yje Derbety</span></div>
<div class="ln"><span class="c1">Gorodovikovo</span><span class="c2">Gorodowikowo</span></div>
<div class="ln"><span class="c1">Plodovitoe</span><span class="c2">P\u0142odowitoje</span></div>
<div class="ln"><span class="c1">Novoaksayskiy</span><span class="c2">Nowoaksajskij</span></div>
<div class="ln"><span class="c1">Generalovskiy</span><span class="c2">Genera\u0142owskij</span></div>
<div class="ln"><span class="c1">Krasnoyarskiy</span><span class="c2">Krasnojaskij</span></div>
<div class="ln"><span class="c1">Pogodin</span><span class="c2">Pogodin</span></div>
<div class="ln"><span class="c1">Blizhneosinovskiy</span><span class="c2">Bli\u017Cneosinowskij</span></div>
<div class="ln"><span class="c1">Verhnechirskiy</span><span class="c2">Verneczirskij</span></div>
<div class="ln"><span class="c1">Marinovka</span><span class="c2">Marinowka</span></div>
<div class="ln"><span class="c1">Kalach_na_Donu</span><span class="c2">Kalach</span></div>
<div class="ln"><span class="c1">Pyatimorskiy</span><span class="c2">Piatimorskij</span></div>
<div class="ln"><span class="c1">Karpovka</span><span class="c2">Karpowka</span></div>
<div class="ln"><span class="c1">Stepnoy</span><span class="c2">Stepnoj</span></div>
<div class="ln"><span class="c1">Bereslavka</span><span class="c2">Bieres\u0142awka</span></div>
<div class="ln"><span class="c1">Vodniy</span><span class="c2">Wodnyj</span></div>
<div class="ln"><span class="c1">Svetliy_Yar</span><span class="c2">Swietlij Jar</span></div>
<div class="ln"><span class="c1">Solodinki</span><span class="c2">So\u0142odinki</span></div>
  </div>
  <div id="nphs"><div class="abs" style="left:0;top:0;width:19px;height:18px;background:#f1f1f1"></div>
    <svg class="abs" style="left:6px;top:4px" width="7" height="10" viewBox="0 0 7 10"><path d="M5.500 1L1.500 5l4 4" fill="none" stroke="#c4c4c4" stroke-width="1.800"/></svg>
  </div>
  <div id="npstat"><div class="t" style="left:535px;top:6px;font-size:11px">Стр 1, стлб 1</div></div>
</div>
<!-- Taskbar -->
<div id="task">
  <div id="tactive"><div id="tglow"></div></div>
  <div class="tsep" style="left:346px"></div>
  <div class="tsep" style="left:506px"></div>
  <div class="tsep" style="left:666px"></div>
  <div class="abs" style="left:858px;top:10px;width:1px;height:2px;background:#ddd"></div><div class="abs" style="left:858px;top:25px;width:1px;height:1px;background:#ddd"></div>
  <svg class="abs" style="left:19px;top:2px" width="32" height="32" viewBox="0 0 32 32" preserveAspectRatio="none"><defs><radialGradient id="ob" cx="0.500" cy="1" r="0.750"><stop offset="0" stop-color="#30e0fc"/><stop offset="0.400" stop-color="#1880c0"/><stop offset="1" stop-color="#143860"/></radialGradient><linearGradient id="oh" x1="0" y1="0" x2="0" y2="1"><stop offset="0" stop-color="#d4e4ec" stop-opacity="0.950"/><stop offset="1" stop-color="#7ca0bc" stop-opacity="0.400"/></linearGradient></defs><circle cx="16" cy="16" r="15.800" fill="#03060a"/><circle cx="16" cy="16" r="14.600" fill="url(#ob)"/><path d="M2 15a14 14 0 0 1 28 0q-14 5.500-28 0z" fill="url(#oh)"/><path d="M8.500 8.300q3.500-2.300 7-0.500l-1.200 7q-3.500-1.800-7 0.500z" fill="#ec5428"/><path d="M16.500 8q3.500 1.800 7.500-0.500l-1.200 7q-4 2.300-7.500 0.500z" fill="#80bc3c"/><path d="M7 16.500q3.500-2.300 7-0.500l-1.200 7q-3.500-1.800-7 0.500z" fill="#50a0e0"/><path d="M15 16.200q3.500 1.800 7.500-0.500l-1.200 7q-4 2.300-7.500 0.500z" fill="#fccc3c"/></svg><svg class="abs" style="left:78px;top:10px" width="16" height="16" viewBox="0 0 16 16" preserveAspectRatio="none"><circle cx="8" cy="8" r="7.600" fill="#30c030"/><path d="M4 1.500l3-1 4 1-6 5-3 3-1.500-2z" fill="#50e048"/><path d="M5.500 7l6-4.500 2.500 2-5.500 5.500z" fill="#2c90f4"/><path d="M7 11.500l3-1.500 3 3-3 2.300q-2 0.500-4-0.500z" fill="#1c30e0"/><path d="M1 10l2.500 0.500 1 3q-2-1-3.500-3.500z" fill="#1c8c2c"/><path d="M3.500 3.500l2-1M11 7.500l2.500-0.500" stroke="#d0fcc8" stroke-width="0.900"/></svg><svg class="abs" style="left:109px;top:10px" width="17" height="17" viewBox="0 0 17 17" preserveAspectRatio="none"><rect x="0.500" y="0.500" width="16" height="16" rx="2" fill="#3c9ce4" stroke="#88c8f8" stroke-width="0.900"/><path d="M2 14.500L15 2.500M3 3l11 11" stroke="#64b8f4" stroke-width="0.700"/><text x="8.500" y="12" font-family="Liberation Sans, sans-serif" font-size="9.500" font-weight="bold" fill="#fff" text-anchor="middle" textLength="15.500" lengthAdjust="spacingAndGlyphs">Snap</text></svg><svg class="abs" style="left:141px;top:10px" width="16" height="17" viewBox="0 0 16 17" preserveAspectRatio="none"><rect x="0.500" y="3.500" width="8" height="8" fill="#9c9c9c" stroke="#c4c4c4" stroke-width="0.600"/><path d="M3 5v5M5 5v5" stroke="#e4e4e4" stroke-width="0.800"/><path d="M6 3.500q0-2.500 3-2.500h3q2.500 0 2.500 2.500v7h-8.500z" fill="#f0b890" stroke="#d08c58" stroke-width="0.600"/><path d="M7.500 5h6v4h-6z" fill="#fce0c8"/><path d="M5.500 11.500h10.500l-5.250 5.500z" fill="#2c94e8"/><path d="M8.500 9.500h4.500v2.500h-4.500z" fill="#2c94e8"/></svg>
  <svg class="abs" style="left:170px;top:15px" width="14" height="8" viewBox="0 0 14 8"><path d="M1 0.500L5 4 1 7.500M7.500 0.500L11.500 4 7.500 7.500" fill="none" stroke="#fff" stroke-width="2.200"/></svg>
  <svg class="abs" style="left:202px;top:11px" width="15" height="15" viewBox="0 0 15 15" preserveAspectRatio="none"><defs><radialGradient id="ff" cx="0.650" cy="0.400" r="0.800"><stop offset="0" stop-color="#fcd840"/><stop offset="0.450" stop-color="#f4941c"/><stop offset="1" stop-color="#d84814"/></radialGradient><radialGradient id="fg" cx="0.450" cy="0.300" r="0.700"><stop offset="0" stop-color="#58b8f0"/><stop offset="1" stop-color="#1c50b4"/></radialGradient></defs><circle cx="7.500" cy="7.700" r="7.200" fill="url(#ff)"/><circle cx="8.200" cy="5.800" r="4.700" fill="url(#fg)"/><path d="M0.400 7q0.300-3.500 3-5.500-0.800 1.800-0.300 3 1.200 0.300 2.400 0-1 1.300-0.300 2.500 1.500 2.200 4.300 1.500 1.500-0.800 1.500-2 1 2-0.500 3.800-2.500 2-6 1-3.500-1-4.100-4.300z" fill="#ec701c"/><path d="M5 5.500q1.500-0.800 2.500 0.200l-1 1.300z" fill="#f8a030"/></svg>
  <div class="t" style="left:221px">AviaSkins.Forums - ...</div>
  <svg class="abs" style="left:362px;top:12px" width="15" height="13" viewBox="0 0 15 13" preserveAspectRatio="none"><path d="M0.500 2.500q0-1.500 1.500-1.500h3.500l1.500 1.500h5.500q1.500 0 1.500 1.500v7q0 1.500-1.500 1.500h-10.500q-1.500 0-1.500-1.500z" fill="#d8a83c"/><path d="M1.500 5h12v6q0 1-1 1h-10q-1 0-1-1z" fill="#fce48c"/><path d="M1.500 5h12v1.500h-12z" fill="#fff0b0"/></svg>
  <div class="t" style="left:381px">D:\Program Files\IL-...</div>
  <svg class="abs" style="left:523px;top:11px" width="16" height="16" viewBox="0 0 17 17" preserveAspectRatio="none"><path d="M5 4h11v12.700h-11z" fill="#f6f2de"/><path d="M3.500 2.500h10.500v12h-10.500z" fill="#a4dcee"/><path d="M3.700 4.500L0.600 13.800 3.700 14.500z" fill="#62acbc"/><path d="M3.500 2.500h2v12h-2z" fill="#84c8dc" opacity="0.800"/><path d="M5 5.500h8.500M5 7.500h8.500M5 9.500h8.500M5 11.500h8.500M5 13.500h8.500" stroke="#84c8e4" stroke-width="0.600"/><path d="M4.400 0.300v2.700M6.700 0.300v2.700M9 0.300v2.700M11.300 0.300v2.700M13.500 0.300v2.700" stroke="#f0f8fc" stroke-width="1.100"/></svg>
  <div class="t" style="left:542px">stgrad_pl.properties...</div>
  <div class="abs" style="left:794px;top:11px;width:16px;height:16px;background:#6c6e6e;color:#fff;font-size:11px;line-height:17px;text-align:center;letter-spacing:-0.300px">UK</div>
  <div class="t" style="left:826px;top:6px;font-size:20px;line-height:24px;font-weight:bold;color:#3c6cd8;transform:scaleX(0.800);transform-origin:0 0;text-shadow:1px 1px 0 #1c2c6c">?</div>
  <svg class="abs" style="left:869px;top:15px" width="12" height="8" viewBox="0 0 12 8"><path d="M5 0.500L1.500 4 5 7.500M10.500 0.500L7 4 10.500 7.500" fill="none" stroke="#fff" stroke-width="2"/></svg>
  <svg class="abs" style="left:886px;top:12px" width="13" height="14" viewBox="0 0 15 16" preserveAspectRatio="none"><rect x="5" y="0.500" width="9.500" height="8" fill="#e8f4fc" stroke="#fff" stroke-width="0.600"/><rect x="6" y="1.500" width="7.500" height="6" fill="#2c9cf0"/><rect x="0.800" y="4.500" width="9.500" height="8" fill="#e8f4fc" stroke="#fff" stroke-width="0.600"/><rect x="1.800" y="5.500" width="7.500" height="6" fill="#3cacf8"/><path d="M4 13h3v1.500h-3zM2.500 14.500h6v1h-6z" fill="#f4f4f4"/></svg><svg class="abs" style="left:904px;top:12px" width="13" height="14" viewBox="0 0 15 16" preserveAspectRatio="none"><rect x="5" y="0.500" width="9.500" height="8" fill="#e8f4fc" stroke="#fff" stroke-width="0.600"/><rect x="6" y="1.500" width="7.500" height="6" fill="#2c9cf0"/><rect x="0.800" y="4.500" width="9.500" height="8" fill="#e8f4fc" stroke="#fff" stroke-width="0.600"/><rect x="1.800" y="5.500" width="7.500" height="6" fill="#3cacf8"/><path d="M4 13h3v1.500h-3zM2.500 14.500h6v1h-6z" fill="#f4f4f4"/></svg><svg class="abs" style="left:921px;top:14px" width="15" height="10" viewBox="0 0 17 12" preserveAspectRatio="none"><rect x="0" y="0" width="17" height="6" fill="#2c6cd8"/><rect x="0" y="6" width="17" height="6" fill="#f8d024"/></svg>
  <div class="t" style="left:948px;font-size:12.500px;top:14px;letter-spacing:0.300px">0:14 Сб 4</div>
</div>

</div>
</body></html>
